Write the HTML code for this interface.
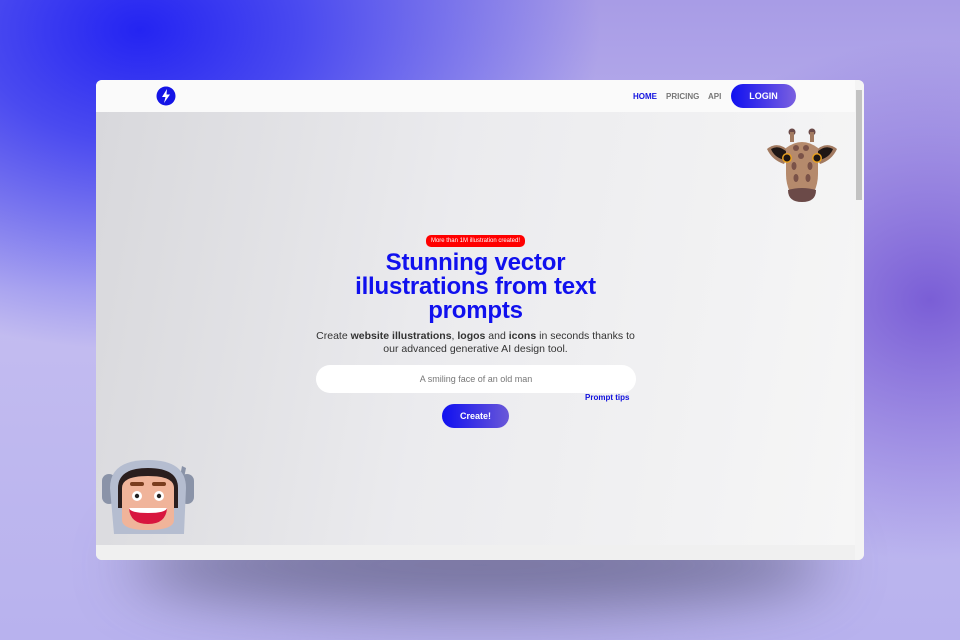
<!DOCTYPE html>
<html><head><style>
*{margin:0;padding:0;box-sizing:border-box}
body{width:960px;height:640px;overflow:hidden;position:relative;font-family:"Liberation Sans",Arial,sans-serif;
background:radial-gradient(ellipse 460px 320px at 140px 30px,#2424f2 0%,#4a4af0 35%,rgba(120,110,230,0) 100%),radial-gradient(ellipse 300px 260px at 930px 300px,#7a5ed6 0%,rgba(140,120,220,0) 100%),linear-gradient(180deg,#a89ce6 0%,#c4bdf0 45%,#b8b2ee 100%);}
.shadow{position:absolute;left:130px;top:520px;width:700px;height:90px;background:rgba(60,60,90,.55);filter:blur(30px);border-radius:50%}
.win{position:absolute;left:96px;top:80px;width:768px;height:480px;border-radius:6px;overflow:hidden;background:#f2f2f2}
.hdr{position:absolute;left:0;top:0;width:759px;height:32px;background:#fafafa}
.main{position:absolute;left:0;top:32px;width:759px;height:433px;background:linear-gradient(100deg,#d8d8dc 0%,#ebebee 45%,#f6f6f6 100%)}
.bot{position:absolute;left:0;top:465px;width:759px;height:15px;background:#f0f0f0}
.sb{position:absolute;left:759px;top:0;width:9px;height:480px;background:#f4f4f4}
.thumb{position:absolute;left:760px;top:10px;width:6px;height:110px;background:#c2c2c2}
.nav{position:absolute;top:12px;font-size:8px;font-weight:bold;color:#777}
.login{position:absolute;left:635px;top:4px;width:65px;height:24px;border-radius:12px;background:linear-gradient(90deg,#1010f0,#7a60e0);color:#fff;font-size:9px;font-weight:bold;text-align:center;line-height:24px}
.c{position:absolute;left:0;width:759px;text-align:center}
</style></head><body>
<div class="shadow"></div>
<div class="win">
<div class="hdr">
<svg style="position:absolute;left:60px;top:6px" width="20" height="20" viewBox="0 0 20 20"><circle cx="10" cy="10" r="9.5" fill="#1414e6"/><path d="M11 3 L6 11 H9.5 L8 17 L14 8.5 H10.5 Z" fill="#fff"/></svg>
<div class="nav" style="left:537px;color:#1212e0">HOME</div>
<div class="nav" style="left:570px">PRICING</div>
<div class="nav" style="left:612px">API</div>
<div class="login">LOGIN</div>
</div>
<div class="main">
<div class="c" style="top:117px"><span style="display:inline-block;background:#f00;color:#fff;font-size:6px;padding:2px 5px;border-radius:5px;line-height:8px">More than 1M illustration created!</span></div>
<div class="c" style="top:139px;font-size:24px;font-weight:bold;color:#1010ee;line-height:24px;letter-spacing:-0.2px">Stunning vector<br>illustrations from text<br>prompts</div>
<div class="c" style="top:218px;font-size:10.5px;color:#333;line-height:13px">Create <b>website illustrations</b>, <b>logos</b> and <b>icons</b> in seconds thanks to<br>our advanced generative AI design tool.</div>
<div style="position:absolute;left:220px;top:253px;width:320px;height:28px;border-radius:14px;background:#fff;text-align:center;line-height:28px;font-size:9px;color:#777">A smiling face of an old man</div>
<div style="position:absolute;left:489px;top:281px;font-size:8px;font-weight:bold;color:#1010dd">Prompt tips</div>
<div style="position:absolute;left:346px;top:292px;width:67px;height:24px;border-radius:12px;background:linear-gradient(90deg,#1010f0,#6a58d8);color:#fff;font-size:9px;font-weight:bold;text-align:center;line-height:24px">Create!</div>
<svg style="position:absolute;left:6px;top:346px" width="92" height="76" viewBox="0 0 92 76">
<path d="M80 8 L84 10 L80 30 L76 29 Z" fill="#8a93a8"/>
<rect x="0" y="16" width="14" height="30" rx="7" fill="#8a93a8"/>
<rect x="78" y="16" width="14" height="30" rx="7" fill="#8a93a8"/>
<path d="M8 30 Q8 2 46 2 Q84 2 84 30 L82 76 H12 Z" fill="#b5bdd0"/>
<path d="M16 30 Q16 10 46 10 Q76 10 76 30 V50 H16 Z" fill="#2a1e1e"/>
<path d="M20 30 Q20 18 46 18 Q72 18 72 30 V62 Q72 72 46 72 Q20 72 20 62 Z" fill="#f0b49a"/>
<rect x="28" y="24" width="14" height="4" rx="2" fill="#7a3d1e"/><rect x="50" y="24" width="14" height="4" rx="2" fill="#7a3d1e"/>
<circle cx="35" cy="38" r="5" fill="#fff"/><circle cx="35" cy="38" r="2.2" fill="#222"/>
<circle cx="57" cy="38" r="5" fill="#fff"/><circle cx="57" cy="38" r="2.2" fill="#222"/>
<path d="M27 50 H65 Q64 66 46 66 Q28 66 27 50 Z" fill="#d8163e"/><path d="M27 50 H65 Q64 55 46 55 Q28 55 27 50 Z" fill="#fff"/>
</svg>
<svg style="position:absolute;left:670px;top:16px" width="72" height="80" viewBox="0 0 72 80">
<circle cx="26" cy="4" r="3.5" fill="#6b4a48"/><circle cx="46" cy="4" r="3.5" fill="#6b4a48"/>
<rect x="24" y="4" width="4" height="10" fill="#a27a60"/><rect x="44" y="4" width="4" height="10" fill="#a27a60"/>
<path d="M1 21 Q12 12 24 24 L18 36 Q6 32 1 21 Z" fill="#a27a60"/><path d="M71 21 Q60 12 48 24 L54 36 Q66 32 71 21 Z" fill="#a27a60"/>
<path d="M5 21 Q13 16 22 25 L18 32 Q8 29 5 21 Z" fill="#1e1614"/><path d="M67 21 Q59 16 50 25 L54 32 Q64 29 67 21 Z" fill="#1e1614"/>
<path d="M20 20 Q36 8 52 20 L52 46 Q52 56 48 64 H24 Q20 56 20 46 Z" fill="#b58a6c"/>
<circle cx="21" cy="30" r="5" fill="#e8a020"/><circle cx="21" cy="30" r="3.5" fill="#1e1614"/>
<circle cx="51" cy="30" r="5" fill="#e8a020"/><circle cx="51" cy="30" r="3.5" fill="#1e1614"/>
<ellipse cx="30" cy="20" rx="3" ry="3" fill="#7a5248"/><ellipse cx="40" cy="20" rx="3" ry="3" fill="#7a5248"/><ellipse cx="35" cy="28" rx="3" ry="3" fill="#7a5248"/><ellipse cx="28" cy="38" rx="2.5" ry="4" fill="#7a5248"/><ellipse cx="44" cy="38" rx="2.5" ry="4" fill="#7a5248"/><ellipse cx="30" cy="50" rx="2.5" ry="4" fill="#7a5248"/><ellipse cx="42" cy="50" rx="2.5" ry="4" fill="#7a5248"/>
<path d="M22 62 Q36 58 50 62 Q50 74 36 74 Q22 74 22 62 Z" fill="#6b4a48"/>
</svg>
</div>
<div class="bot"></div>
<div class="sb"></div><div class="thumb"></div>
</div>
</body></html>
